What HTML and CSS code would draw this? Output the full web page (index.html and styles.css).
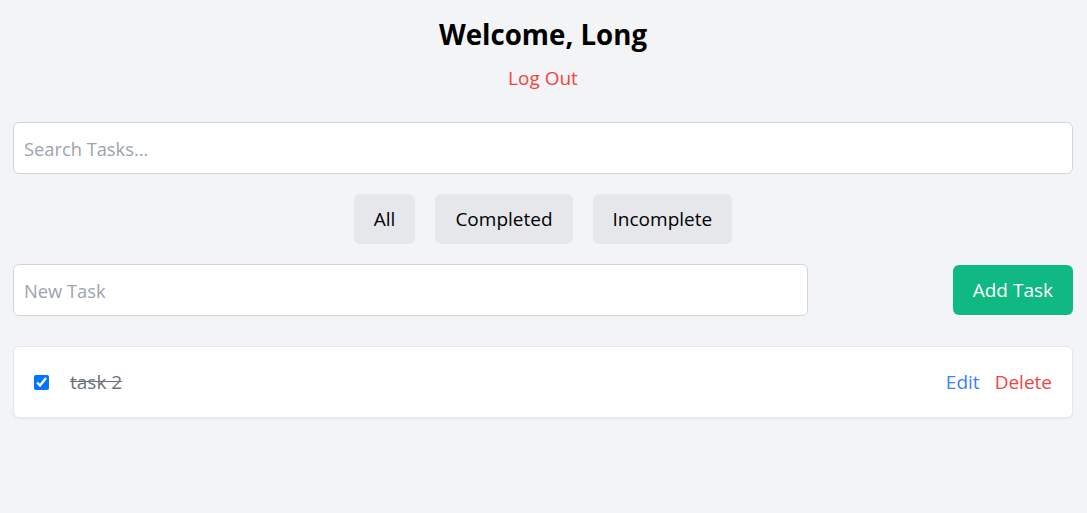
FILE: index.html
```html
<!DOCTYPE html>
<html>
<head>
<meta charset="utf-8">
<link rel="stylesheet" href="styles.css">
</head>
<body>
<div class="page">
  <h1 class="title">Welcome, Long</h1>
  <div class="logout-row"><a class="logout">Log Out</a></div>
  <input class="field search" type="text" placeholder="Search Tasks...">
  <div class="filters">
    <button class="filter">All</button>
    <button class="filter">Completed</button>
    <button class="filter">Incomplete</button>
  </div>
  <div class="new-row">
    <input class="field new" type="text" placeholder="New Task">
    <button class="add">Add Task</button>
  </div>
  <ul class="list">
    <li class="task">
      <div class="task-left">
        <input type="checkbox" class="check" checked>
        <span class="task-text done">task 2</span>
      </div>
      <div class="actions">
        <a class="edit">Edit</a>
        <a class="delete">Delete</a>
      </div>
    </li>
  </ul>
</div>
</body>
</html>
```
FILE: styles.css
```css
* { box-sizing: border-box; }
html, body { margin: 0; padding: 0; }
body {
  background: #f3f4f6;
  font-family: "Open Sans", "Noto Sans", sans-serif;
  color: #111;
}
.page {
  padding: 14px 14px 14px 13px;
}
.title {
  margin: 0;
  text-align: center;
  font-size: 27.7px;
  font-weight: 700;
  line-height: 40px;
  color: #000;
}
.logout-row {
  text-align: center;
  margin-top: 10px;
}
.logout {
  color: #ef4444;
  font-size: 19px;
  line-height: 28px;
  cursor: pointer;
}
.field {
  display: block;
  height: 52px;
  border: 1px solid #d1d5db;
  border-radius: 6px;
  background: #fff;
  font-family: inherit;
  font-size: 18.3px;
  padding: 0 10px;
  outline: none;
  color: #111;
}
.field::placeholder { color: #9ca3af; }
.search {
  width: 100%;
  margin-top: 30px;
}
.filters {
  display: flex;
  justify-content: center;
  gap: 20px;
  margin-top: 20px;
}
.filter {
  background: #e5e7eb;
  border: none;
  border-radius: 6px;
  font-family: inherit;
  font-size: 19px;
  line-height: 28px;
  padding: 11px 20px;
  color: #000;
}
.new-row {
  display: flex;
  justify-content: space-between;
  align-items: center;
  margin-top: 20px;
}
.new { width: 795px; }
.add {
  background: #10b981;
  color: #fff;
  border: none;
  border-radius: 6px;
  font-family: inherit;
  font-size: 19px;
  line-height: 28px;
  padding: 11px 20px;
}
.list {
  list-style: none;
  margin: 30px 0 0;
  padding: 0;
}
.task {
  display: flex;
  justify-content: space-between;
  align-items: center;
  background: #fff;
  border: 1px solid #e5e7eb;
  border-radius: 6px;
  box-shadow: 0 1px 2px rgba(0,0,0,0.05);
  height: 72px;
  padding: 0 20px 0 20px;
}
.task-left {
  display: flex;
  align-items: center;
}
.check {
  margin: 0;
  width: 15px;
  height: 15px;
  accent-color: #0075ff;
}
.task-text {
  margin-left: 21px;
  font-size: 19px;
  line-height: 28px;
}
.done {
  text-decoration: line-through;
  color: #6b7280;
}
.actions {
  display: flex;
  gap: 15px;
  font-size: 19px;
  line-height: 28px;
}
.edit { color: #3b82f6; cursor: pointer; }
.delete { color: #ef4444; cursor: pointer; }
```
